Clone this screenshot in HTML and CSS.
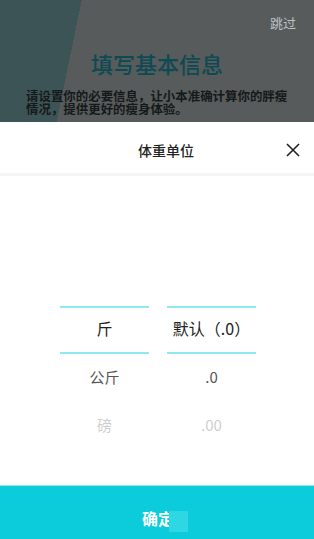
FILE: index.html
```html
<!DOCTYPE html>
<html lang="zh-CN">
<head>
<meta charset="utf-8">
<title>体重单位</title>
<link rel="stylesheet" href="styles.css">
</head>
<body>
<div class="screen">
  <div class="overlay">
    <div class="skip">跳过</div>
    <h1 class="title">填写基本信息</h1>
    <p class="desc">请设置你的必要信息，让小本准确计算你的胖瘦情况，提供更好的瘦身体验。</p>
  </div>
  <div class="sheet">
    <div class="sheet-header">
      <span></span>
      <div class="sheet-title">体重单位</div>
      <button class="close" aria-label="关闭">
        <svg width="14" height="14" viewBox="0 0 14 14"><path d="M1 1 L13 13 M13 1 L1 13" stroke="#222" stroke-width="1.6" fill="none"/></svg>
      </button>
    </div>
    <div class="divider"></div>
    <div class="picker">
      <div class="col">
        <div class="row"></div>
        <div class="row"></div>
        <div class="row selected">斤</div>
        <div class="row near">公斤</div>
        <div class="row far">磅</div>
      </div>
      <div class="col">
        <div class="row"></div>
        <div class="row"></div>
        <div class="row selected">默认（.0）</div>
        <div class="row near">.0</div>
        <div class="row far">.00</div>
      </div>
    </div>
    <button class="confirm">确定<span class="patch"></span></button>
  </div>
</div>
</body>
</html>
```
FILE: styles.css
```css
* { box-sizing: border-box; }
html, body {
  margin: 0;
  padding: 0;
}
body {
  width: 314px;
  height: 539px;
  overflow: hidden;
  font-family: "Noto Sans CJK SC", "Noto Sans", sans-serif;
  background: #fff;
}
.screen {
  display: flex;
  flex-direction: column;
  width: 314px;
  height: 539px;
  overflow: hidden;
}
.overlay {
  height: 122px;
  flex: none;
  background: linear-gradient(101.6deg, #3d5457 80px, #575b5b 80px);
  padding-top: 16px;
  display: flex;
  flex-direction: column;
}
.skip {
  align-self: flex-end;
  margin-right: 18px;
  font-size: 13px;
  line-height: 14px;
  color: #bdc1c1;
}
.title {
  margin: 20px 0 0;
  text-align: center;
  font-size: 22px;
  line-height: 26px;
  font-weight: 500;
  color: #0d4a53;
}
.desc {
  margin: 14px 24px 0 26px;
  font-size: 12.45px;
  line-height: 13px;
  font-weight: 700;
  color: #151919;
}
.sheet {
  flex: none;
  height: 427px;
  background: #fff;
  display: flex;
  flex-direction: column;
}
.sheet-header {
  height: 51px;
  flex: none;
  display: grid;
  grid-template-columns: 1fr auto 1fr;
  align-items: center;
  padding: 4px 0 0 18px;
}
.sheet-title {
  font-size: 14px;
  line-height: 16px;
  color: #222;
  font-weight: 500;
}
.close {
  justify-self: end;
  margin-right: 14px;
  padding: 0;
  border: 0;
  background: none;
  width: 14px;
  height: 14px;
  display: flex;
}
.divider {
  height: 3px;
  flex: none;
  background: #f5f5f5;
}
.picker {
  height: 309px;
  flex: none;
  display: flex;
  gap: 18px;
  padding: 34px 0 0 60px;
}
.col {
  width: 89px;
  display: flex;
  flex-direction: column;
}
.row {
  height: 48px;
  display: flex;
  align-items: center;
  justify-content: center;
  padding-bottom: 4px;
  font-size: 15px;
  color: #555;
}
.row.selected {
  border-top: 2px solid #8ee9f0;
  border-bottom: 2px solid #8ee9f0;
  font-size: 16px;
  color: #222;
}
.row.near { color: #555; }
.row.far { color: #cfcfcf; }
.confirm {
  position: relative;
  flex: none;
  height: 64px;
  border: 0;
  border-top: 1px solid #8fe9ef;
  background: #0ccbda;
  color: #fff;
  font-family: inherit;
  font-size: 16px;
  font-weight: 700;
  display: flex;
  align-items: center;
  justify-content: center;
  padding: 0 0 0 2px;
}
.patch {
  position: absolute;
  left: 169px;
  top: 25px;
  width: 19px;
  height: 21px;
  background: #2dd8e4;
}
```
